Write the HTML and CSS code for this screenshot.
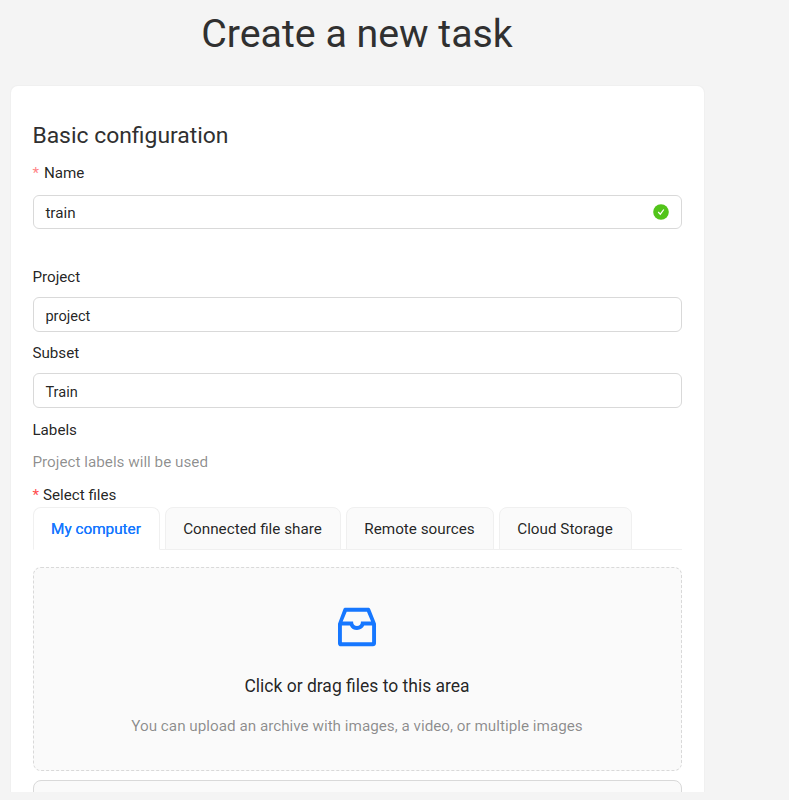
FILE: index.html
```html
<!DOCTYPE html>
<html lang="en">
<head>
<meta charset="utf-8">
<title>Create a new task</title>
<link rel="stylesheet" href="styles.css">
</head>
<body>
<main class="page">
  <h1 class="title">Create a new task</h1>
  <section class="card">
    <h2 class="heading">Basic configuration</h2>
    <div class="label label-name"><span class="star star-light">*</span>Name</div>
    <div class="field field-name"><span>train</span>
      <svg class="check" viewBox="0 0 16 16"><circle cx="8" cy="8" r="7.8" fill="#52c41a"/><path d="M5.2 8 7.3 10.2 10.8 5.500" fill="none" stroke="#fff" stroke-width="1.2"/></svg>
    </div>
    <div class="label label-project">Project</div>
    <div class="field">project</div>
    <div class="label label-subset">Subset</div>
    <div class="field">Train</div>
    <div class="label label-labels">Labels</div>
    <div class="hint">Project labels will be used</div>
    <div class="label label-files"><span class="star">*</span>Select files</div>
    <nav class="tabs">
      <div class="tab tab-1 active">My computer</div>
      <div class="tab tab-2">Connected file share</div>
      <div class="tab tab-3">Remote sources</div>
      <div class="tab tab-4">Cloud Storage</div>
    </nav>
    <div class="drop">
      <svg class="inbox" viewBox="0 0 1024 1024" fill="#1677ff"><path d="M885.2 446.3l-.2-.8-112.2-285.1c-5-16.1-19.9-27.2-36.8-27.2H281.200c-17 0-32.100 11.300-36.900 27.600L139.400 443l-.3.700-.2.800c-1.300 4.900-1.700 9.900-1 14.800-.1 1.600-.2 3.200-.2 4.800V830a60.900 60.900 0 0 0 60.800 60.800h627.200c33.500 0 60.800-27.300 60.900-60.800V464.100c0-1.300 0-2.600-.1-3.700.4-4.900 0-9.600-1.300-14.100zm-295.800-43l-.3 15.700c-.8 44.900-31.800 75.100-77.100 75.100-22.100 0-41.100-7.100-54.800-20.600S436 441.200 435.600 419l-.3-15.700H229.500L309 210h399.200l81.700 193.300H589.400zm-375 76.800h157.300c24.300 57.100 76 90.800 140.400 90.800 33.700 0 65-9.400 90.300-27.200 22.200-15.600 39.500-37.400 50.700-63.600h156.500V814H214.400V480.100z"/></svg>
      <div class="drop-title">Click or drag files to this area</div>
      <div class="drop-hint">You can upload an archive with images, a video, or multiple images</div>
    </div>
    <div class="next"></div>
  </section>
</main>
</body>
</html>
```
FILE: styles.css
```css
* { box-sizing: border-box; }
body { margin: 0; background: #f4f4f4; color: rgba(0, 0, 0, .87); font: 15.250px/24px Roboto, "Liberation Sans", sans-serif; overflow: hidden; }
.page { width: 695px; margin-left: 10px; }
.title { margin: 0; height: 85px; padding: 9px 1px 0 0; font-size: 39.300px; line-height: 50px; font-weight: 400; text-align: center; white-space: nowrap; color: #303030; }
.card { height: 707px; padding: 35px 22px 0; background: #fff; border: 1px solid #f0f0f0; border-bottom: 0; border-radius: 8px 8px 0 0; overflow: hidden; }
.heading { margin: 0 0 0 -.6px; font-size: 22.900px; line-height: 30px; font-weight: 400; color: #303030; }
.label { height: 24px; font-size: 15.200px; white-space: nowrap; text-indent: -.6px; }
.label-name { margin-top: 10px; }
.star { color: #ff4d4f; margin-right: 4px; }
.star-light { color: #ff8587; margin-right: 5px; }
.field { height: 35px; display: flex; align-items: center; justify-content: space-between; border: 1px solid #d9d9d9; border-radius: 6px; padding: 2px 12px 0 11.400px; font-size: 14.600px; }
.field-name { height: 34px; margin-top: 10px; font-size: 15.200px; }
.check { width: 16px; height: 16px; margin-top: -3px; }
.label-project { margin: 36px 0 8px; }
.label-subset { margin: 9px 0 8px; }
.label-labels { margin-top: 10px; }
.hint { margin-top: 8px; color: rgba(0, 0, 0, .45); text-indent: -.6px; }
.label-files { margin-top: 9px; }
.tabs { display: flex; gap: 5px; height: 43px; border-bottom: 1px solid #f0f0f0; }
.tab { height: 43px; padding-right: 1px; border: 1px solid #f0f0f0; border-radius: 8px 8px 0 0; background: #fafafa; text-align: center; line-height: 42px; white-space: nowrap; }
.tab-1 { width: 127px; }
.tab-2 { width: 176px; }
.tab-3 { width: 148px; }
.tab-4 { width: 133px; }
.active { background: #fff; border-bottom-color: #fff; color: #1677ff; font-size: 15.300px; text-shadow: 0 0 .25px currentcolor; }
.drop { height: 204px; margin-top: 17px; padding-right: 1px; border: 1px dashed #d9d9d9; border-radius: 8px; background: #fafafa; display: flex; flex-direction: column; align-items: center; }
.inbox { width: 52px; height: 52px; margin-top: 33px; }
.drop-title { margin-top: 20px; font-size: 17.500px; line-height: 26px; }
.drop-hint { margin-top: 15px; color: rgba(0, 0, 0, .45); }
.next { height: 40px; margin-top: 9px; border: 1px solid #d9d9d9; border-radius: 8px; background: #fafafa; }
```
